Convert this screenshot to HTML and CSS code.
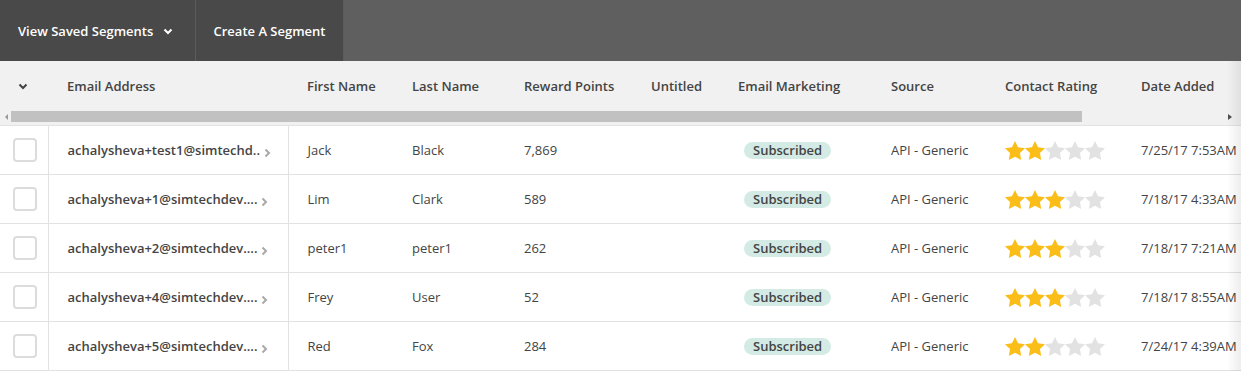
FILE: index.html
```html
<!DOCTYPE html>
<html lang="en">
<head>
    <meta charset="UTF-8">
    <title>Contacts</title>
    <link rel="stylesheet" href="styles.css">
</head>
<body>
    <div class="page">
        <div class="toolbar">
            <button class="tool-btn">View Saved Segments
                <svg class="chev" width="10" height="7" viewBox="0 0 10 7"><path d="M1.5 1.5 L5 5 L8.5 1.5" fill="none" stroke="#fff" stroke-width="2"/></svg>
            </button>
            <button class="tool-btn">Create A Segment</button>
        </div>

        <div class="grid-wrap">
            <table class="grid">
                <colgroup>
                    <col style="width:48px"><col style="width:240px"><col style="width:105px"><col style="width:112px">
                    <col style="width:127px"><col style="width:87px"><col style="width:153px"><col style="width:114px">
                    <col style="width:136px"><col style="width:120px">
                </colgroup>
                <thead>
                    <tr>
                        <th class="sel"><svg width="10" height="7" viewBox="0 0 10 7"><path d="M1.5 1.5 L5 5 L8.5 1.5" fill="none" stroke="#444" stroke-width="2"/></svg></th>
                        <th>Email Address</th>
                        <th>First Name</th>
                        <th>Last Name</th>
                        <th>Reward Points</th>
                        <th>Untitled</th>
                        <th>Email Marketing</th>
                        <th>Source</th>
                        <th>Contact Rating</th>
                        <th>Date Added</th>
                        <th></th>
                    </tr>
                    <tr class="scroll-row">
                        <td colspan="11">
                            <div class="hscroll">
                                <span class="arrow-left"></span>
                                <div class="thumb"></div>
                                <span class="arrow-right"></span>
                            </div>
                        </td>
                    </tr>
                </thead>
                <tbody id="rows"></tbody>
            </table>
            <div class="edge-fade"></div>
        </div>
    </div>

    <script>
        var contacts = [
            ['achalysheva+test1@simtechd..', 'Jack', 'Black', '7,869', 2, '7/25/17 7:53AM'],
            ['achalysheva+1@simtechdev....', 'Lim', 'Clark', '589', 3, '7/18/17 4:33AM'],
            ['achalysheva+2@simtechdev....', 'peter1', 'peter1', '262', 3, '7/18/17 7:21AM'],
            ['achalysheva+4@simtechdev....', 'Frey', 'User', '52', 3, '7/18/17 8:55AM'],
            ['achalysheva+5@simtechdev....', 'Red', 'Fox', '284', 2, '7/24/17 4:39AM']
        ];

        var starPath = 'M10 0 L13.06 6.29 L19.99 7.26 L14.95 12.11 L16.17 18.99 L10 15.7 L3.83 18.99 L5.05 12.11 L0.01 7.26 L6.94 6.29 Z';

        function stars(count) {
            var html = '';
            for (var i = 0; i < 5; i++) {
                html += '<svg width="20" height="19" viewBox="0 0 20 19"><path d="' + starPath + '" fill="' + (i < count ? '#fbbd17' : '#e2e2e2') + '"/></svg>';
            }
            return html;
        }

        var body = document.getElementById('rows');
        contacts.forEach(function (c) {
            var row = document.createElement('tr');
            row.innerHTML = `
                <td class="sel"><span class="checkbox"></span></td>
                <td class="email">${c[0]}<svg class="more" width="7" height="10" viewBox="0 0 7 10"><path d="M1.5 1.5 L5 5 L1.5 8.5" fill="none" stroke="#a9a9a9" stroke-width="2"/></svg></td>
                <td>${c[1]}</td>
                <td>${c[2]}</td>
                <td>${c[3]}</td>
                <td></td>
                <td><span class="badge">Subscribed</span></td>
                <td>API - Generic</td>
                <td><span class="stars">${stars(c[4])}</span></td>
                <td>${c[5]}</td>
                <td></td>
            `;
            body.appendChild(row);
        });
    </script>
</body>
</html>
```

FILE: styles.css
```css
body {
    margin: 0;
    font-family: "Open Sans", Arial, sans-serif;
    font-size: 13px;
    color: #444;
    background-color: #fff;
}

.page {
    width: 1241px;
}

.toolbar {
    display: flex;
    height: 61px;
    background-color: #5f5f5f;
}

.tool-btn {
    display: flex;
    align-items: center;
    gap: 10px;
    height: 61px;
    padding: 0 18px;
    border: none;
    border-right: 1px solid #5c5c5c;
    background-color: #494949;
    color: #fff;
    font-family: inherit;
    font-size: 13px;
    font-weight: 600;
    cursor: pointer;
}

.tool-btn:first-child {
    width: 196px;
}

.tool-btn:nth-child(2) {
    width: 148px;
    justify-content: center;
    padding: 0;
}

.chev {
    margin-top: 1px;
}

.grid-wrap {
    position: relative;
    overflow: hidden;
}

.grid {
    width: 1400px;
    table-layout: fixed;
    border-collapse: collapse;
}

th {
    height: 50px;
    padding: 0 0 0 19px;
    background-color: #f1f1f1;
    text-align: left;
    font-weight: 600;
    color: #444;
    white-space: nowrap;
}

th.sel {
    padding: 0 0 0 18px;
}

th.sel svg {
    display: block;
}

.scroll-row td {
    padding: 0;
    height: 14px;
    background-color: #f1f1f1;
    border-bottom: 1px solid #e2e2e2;
}

.hscroll {
    display: flex;
    align-items: flex-start;
    width: 1241px;
    height: 14px;
}

.arrow-left {
    width: 0;
    height: 0;
    margin: 3px 3px 0 5px;
    border-top: 3px solid transparent;
    border-bottom: 3px solid transparent;
    border-right: 3px solid #9a9a9a;
}

.thumb {
    width: 1071px;
    height: 11px;
    background-color: #c1c1c1;
}

.arrow-right {
    width: 0;
    height: 0;
    margin: 3px 0 0 146px;
    border-top: 3px solid transparent;
    border-bottom: 3px solid transparent;
    border-left: 4px solid #505050;
}

tbody td {
    height: 48px;
    padding: 0 0 0 19px;
    border-bottom: 1px solid #e2e2e2;
    white-space: nowrap;
    overflow: hidden;
}

tbody td.sel {
    padding: 0 0 0 13px;
    border-right: 1px solid #e2e2e2;
}

tbody td.email {
    font-weight: 600;
    border-right: 1px solid #e2e2e2;
}

.checkbox {
    display: block;
    width: 20px;
    height: 20px;
    border: 2px solid #dcdcdc;
    border-radius: 4px;
}

.more {
    margin-left: 4px;
    vertical-align: -3px;
}

.badge {
    display: inline-block;
    margin-left: 6px;
    padding: 0 9px;
    line-height: 17px;
    border-radius: 9px;
    background-color: #d3ebe4;
    font-weight: 600;
    color: #444;
}

.stars {
    display: inline-flex;
    vertical-align: middle;
}

.stars svg {
    display: block;
}

.edge-fade {
    position: absolute;
    top: 0;
    right: 0;
    width: 14px;
    height: 100%;
    background: linear-gradient(to right, rgba(0, 0, 0, 0), rgba(0, 0, 0, 0.07));
    pointer-events: none;
}
```
